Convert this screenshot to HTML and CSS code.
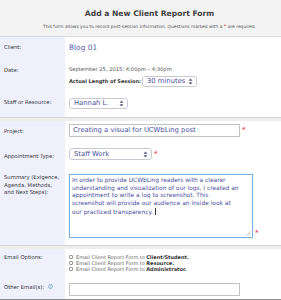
FILE: index.html
```html
<!DOCTYPE html>
<html lang="en">
<head>
    <meta charset="UTF-8">
    <title>Add a New Client Report Form</title>
    <link rel="stylesheet" href="styles.css">
</head>
<body>
    <div class="form-header">
        <h1>Add a New Client Report Form</h1>
        <p>This form allows you to record post-session information. Questions marked with a <span class="req">*</span> are required.</p>
    </div>

    <div class="row row-client">
        <div class="label">Client:</div>
        <div class="field"><div class="client-name">Blog 01</div></div>
    </div>

    <div class="row row-date">
        <div class="label">Date:</div>
        <div class="field">
            <div class="date-text">September 25, 2015: 4:00pm &ndash; 4:30pm</div>
            <div class="length-line">
                <span class="length-label">Actual Length of Session:</span>
                <div class="select select-length">
                    <span>30 minutes</span>
                    <svg width="5" height="7" viewBox="0 0 5 7"><path d="M2.5 0.5 L4.5 2.8 L0.5 2.8 Z M2.5 6.5 L4.5 4.2 L0.5 4.2 Z" fill="#5a5a7a"/></svg>
                </div>
            </div>
        </div>
    </div>

    <div class="row row-staff">
        <div class="label">Staff or Resource:</div>
        <div class="field">
            <div class="select select-staff">
                <span>Hannah L.</span>
                <svg width="5" height="7" viewBox="0 0 5 7"><path d="M2.5 0.5 L4.5 2.8 L0.5 2.8 Z M2.5 6.5 L4.5 4.2 L0.5 4.2 Z" fill="#5a5a7a"/></svg>
            </div>
        </div>
    </div>

    <div class="divider"></div>

    <div class="row row-project">
        <div class="label">Project:</div>
        <div class="field with-req">
            <div class="input input-project">Creating a visual for UCWbLing post</div>
            <span class="req">*</span>
        </div>
    </div>

    <div class="row row-type">
        <div class="label">Appointment Type:</div>
        <div class="field with-req">
            <div class="select select-type">
                <span>Staff Work</span>
                <svg width="5" height="7" viewBox="0 0 5 7"><path d="M2.5 0.5 L4.5 2.8 L0.5 2.8 Z M2.5 6.5 L4.5 4.2 L0.5 4.2 Z" fill="#5a5a7a"/></svg>
            </div>
            <span class="req">*</span>
        </div>
    </div>

    <div class="row row-summary">
        <div class="label">Summary (Exigence, Agenda, Methods, and Next Steps):</div>
        <div class="field with-req bottom">
            <div class="textarea">In order to provide UCWbLing readers with a clearer<br>understanding and visualization of our logs, I created an<br>appointment to write a log to screenshot. This<br>screenshot will provide our audience an inside look at<br>our practiced transparency. <span class="caret"></span>
                <svg class="grip" width="5" height="5" viewBox="0 0 5 5"><path d="M0.5 4.5 L4.5 0.5 M2.5 4.5 L4.5 2.5" stroke="#999" stroke-width="0.6"/></svg>
            </div>
            <span class="req">*</span>
        </div>
    </div>

    <div class="divider"></div>

    <div class="row row-email">
        <div class="label">Email Options:</div>
        <div class="field">
            <label class="check"><span class="box"></span>Email Client Report Form to <b>Client/Student.</b></label>
            <label class="check"><span class="box"></span>Email Client Report Form to <b>Resource.</b></label>
            <label class="check"><span class="box"></span>Email Client Report Form to <b>Administrator.</b></label>
        </div>
    </div>

    <div class="row row-other">
        <div class="label">Other Email(s): <span class="help">?</span></div>
        <div class="field">
            <div class="input input-other"></div>
        </div>
    </div>

    <div class="footer-line"></div>
</body>
</html>
```

FILE: styles.css
```css
* {
    margin: 0;
    padding: 0;
    box-sizing: border-box;
}

body {
    font-family: 'DejaVu Sans', Verdana, sans-serif;
    background: white;
    color: #333;
    width: 281px;
    overflow: hidden;
}

.form-header {
    background: #f3f3f3;
    height: 37px;
    border-bottom: 1px solid #dcdcdc;
    text-align: center;
    padding-top: 9px;
}

.form-header h1 {
    font-size: 7.6px;
    line-height: 9px;
    color: #444;
    margin-left: 18px;
}

.form-header p {
    font-size: 4.4px;
    line-height: 6px;
    color: #555;
    margin-top: 6px;
    margin-left: 18px;
}

.req {
    color: #e0262b;
    font-size: 7px;
}

.form-header .req {
    font-size: 5px;
    line-height: 4px;
}

.row {
    display: flex;
}

.label {
    width: 65px;
    flex-shrink: 0;
    background: #eef0fc;
    font-size: 5.3px;
    line-height: 7px;
    color: #333;
    padding-left: 4px;
    padding-right: 3px;
}

.field {
    flex: 1;
    padding-left: 4px;
    font-size: 6px;
    line-height: 7px;
}

.with-req {
    display: flex;
    align-items: flex-start;
}

.with-req .req {
    margin-left: 2px;
    line-height: 9px;
    margin-top: 2px;
}

.with-req.bottom {
    align-items: flex-end;
}

/* row heights */
.row-client { height: 21px; }
.row-client .label { padding-top: 7px; }
.row-client .field { padding-top: 6px; }

.client-name {
    font-size: 7.4px;
    line-height: 9px;
    color: #5861b0;
}

.row-date { height: 33px; }
.row-date .label { padding-top: 9px; }
.row-date .field { padding-top: 8px; }

.date-text {
    font-size: 5.2px;
    line-height: 7px;
    color: #555;
}

.length-line {
    display: flex;
    align-items: center;
    margin-top: 3px;
}

.length-label {
    font-size: 5px;
    font-weight: bold;
    color: #333;
    margin-right: 1px;
}

.select {
    display: flex;
    align-items: center;
    justify-content: space-between;
    background: white;
    border: 1px solid #c9c9d4;
    border-radius: 3px;
    font-size: 6.8px;
    color: #4a50a0;
    padding: 0 3px 0 4px;
}

.select-length { width: 55px; height: 11px; }

.row-staff { height: 26px; }
.row-staff .label { padding-top: 8px; }
.row-staff .field { padding-top: 7px; }
.select-staff { width: 59px; height: 11px; }

.divider {
    height: 4px;
    border-top: 1px solid #d6d6d6;
    background: #eeeeee;
}

.row-project { height: 23px; }
.row-project .label { padding-top: 7px; }
.row-project .field { padding-top: 3px; }

.input {
    background: white;
    border: 1px solid #c2c2c2;
    height: 13px;
    font-size: 6.8px;
    line-height: 11px;
    color: #4a50a0;
    padding-left: 3px;
}

.input-project { width: 171px; }

.row-type { height: 26px; }
.row-type .label { padding-top: 9px; }
.row-type .field { padding-top: 4px; }
.select-type { width: 83px; height: 12px; }

.row-summary { height: 75px; }
.row-summary .label { padding-top: 4px; line-height: 7.6px; }
.row-summary .field { padding-top: 4px; padding-bottom: 7px; }

.textarea {
    position: relative;
    width: 184px;
    height: 64px;
    border: 1px solid #7fb1e3;
    box-shadow: 0 0 1px #9cc6ee;
    font-size: 5.9px;
    line-height: 7.7px;
    color: #4a50a0;
    padding: 2px 2px 0 2px;
    background: white;
    white-space: nowrap;
}

.caret {
    display: inline-block;
    width: 0.6px;
    height: 7px;
    background: #333;
    vertical-align: -1px;
}

.grip {
    position: absolute;
    right: 1px;
    bottom: 1px;
}

.row-email { height: 26px; }
.row-email .label { padding-top: 5px; }
.row-email .field { padding-top: 5px; }

.check {
    display: flex;
    align-items: center;
    font-size: 5px;
    line-height: 6px;
    color: #666;
}

.check b {
    color: #333;
    margin-left: 1.3px;
}

.box {
    width: 4px;
    height: 4px;
    border: 0.6px solid #999;
    border-radius: 1px;
    margin-right: 3px;
    background: white;
}

.row-other { height: 24px; }
.row-other .label { padding-top: 9px; }
.row-other .field { padding-top: 8px; }
.input-other { width: 171px; }

.help {
    display: inline-block;
    width: 5px;
    height: 5px;
    border: 0.6px solid #8fb3d9;
    border-radius: 50%;
    font-size: 3.5px;
    line-height: 4px;
    text-align: center;
    color: #6f98c8;
    vertical-align: 1px;
    margin-left: 2px;
}

.footer-line {
    height: 2px;
    border-top: 1px solid #8a8a8a;
    background: #d0d0d0;
}
```
